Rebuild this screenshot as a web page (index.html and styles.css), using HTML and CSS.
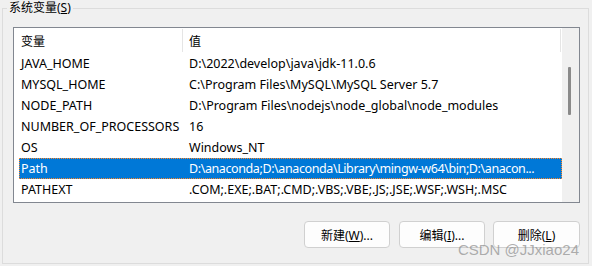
FILE: index.html
```html
<!DOCTYPE html>
<html lang="zh-CN">
<head>
    <meta charset="UTF-8">
    <meta name="viewport" content="width=device-width, initial-scale=1.0">
    <title>系统变量</title>
    <link rel="stylesheet" href="styles.css">
</head>
<body>

    <!-- System variables group -->
    <div class="group">
        <span class="group-title">系统变量(<u>S</u>)</span>

        <!-- Variable list -->
        <div class="list">
            <div class="list-content">
                <div class="list-header">
                    <div class="head-cell head-name">变量</div>
                    <div class="head-cell head-value">值</div>
                </div>

                <div class="row">
                    <div class="cell-name">JAVA_HOME</div>
                    <div class="cell-value">D:\2022\develop\java\jdk-11.0.6</div>
                </div>
                <div class="row">
                    <div class="cell-name">MYSQL_HOME</div>
                    <div class="cell-value">C:\Program Files\MySQL\MySQL Server 5.7</div>
                </div>
                <div class="row">
                    <div class="cell-name">NODE_PATH</div>
                    <div class="cell-value">D:\Program Files\nodejs\node_global\node_modules</div>
                </div>
                <div class="row">
                    <div class="cell-name">NUMBER_OF_PROCESSORS</div>
                    <div class="cell-value">16</div>
                </div>
                <div class="row">
                    <div class="cell-name">OS</div>
                    <div class="cell-value">Windows_NT</div>
                </div>
                <div class="row selected">
                    <div class="cell-name">Path</div>
                    <div class="cell-value cell-long">D:\anaconda;D:\anaconda\Library\mingw-w64\bin;D:\anacon...</div>
                </div>
                <div class="row">
                    <div class="cell-name">PATHEXT</div>
                    <div class="cell-value">.COM;.EXE;.BAT;.CMD;.VBS;.VBE;.JS;.JSE;.WSF;.WSH;.MSC</div>
                </div>
            </div>

            <!-- Vertical scrollbar -->
            <div class="scrollbar">
                <div class="thumb"></div>
            </div>
        </div>

        <!-- Buttons -->
        <div class="actions">
            <button class="btn">新建(<u>W</u>)...</button>
            <button class="btn">编辑(<u>I</u>)...</button>
            <button class="btn btn-last">删除(<u>L</u>)</button>
        </div>

        <span class="watermark">CSDN @JJxiao24</span>
    </div>

</body>
</html>
```

FILE: styles.css
```css
body {
    font-family: "Noto Sans", "Noto Sans CJK SC", sans-serif;
    font-size: 12px;
    background-color: #f0f0f0;
    color: #000;
    margin: 0;
    padding: 0;
    width: 592px;
    height: 266px;
    overflow: hidden;
}

.group {
    position: relative;
    box-sizing: border-box;
    width: 587px;
    height: 256px;
    margin: 8px 0 0 2px;
    padding: 18px 8px 0 10px;
    border: 1px solid #dcdcdc;
}

.group-title {
    position: absolute;
    top: -9px;
    left: 4px;
    padding: 0 2px;
    line-height: 16px;
    background-color: #f0f0f0;
}

.list {
    display: flex;
    box-sizing: border-box;
    width: 567px;
    height: 176px;
    border: 1px solid #828790;
    background-color: #fff;
}

.list-content {
    flex: 1;
    padding-left: 5px;
    overflow: hidden;
}

.list-header {
    display: flex;
    height: 25px;
}

.head-cell {
    box-sizing: border-box;
    height: 23px;
    margin: 1px 0;
    line-height: 25px;
    border-right: 1px solid #e5e5e5;
}

.head-name {
    width: 164px;
    padding-left: 2px;
}

.head-value {
    width: 378px;
    padding-left: 6px;
}

.row {
    display: grid;
    grid-template-columns: 163px 1fr;
    height: 21px;
    line-height: 21px;
    font-size: 12.5px;
}

.cell-name {
    padding-left: 2px;
    white-space: nowrap;
}

.cell-value {
    padding: 0 4px 0 7px;
    white-space: nowrap;
    overflow: hidden;
}

.cell-long {
    letter-spacing: -0.4px;
    overflow: visible;
}

.row.selected {
    background-color: #0078d7;
    color: #fff;
    outline: 1px dotted #ff8728;
    outline-offset: -1px;
}

.scrollbar {
    position: relative;
    width: 17px;
    background-color: #f0f0f0;
}

.thumb {
    position: absolute;
    top: 39px;
    left: 6px;
    width: 3px;
    height: 48px;
    border-radius: 1px;
    background-color: #8a8a8a;
}

.actions {
    display: flex;
    justify-content: flex-end;
    width: 567px;
    margin-top: 18px;
}

.btn {
    box-sizing: border-box;
    width: 86px;
    height: 27px;
    margin-left: 9px;
    padding: 0;
    font-family: inherit;
    font-size: 12px;
    color: #000;
    background-color: #fdfdfd;
    border: 1px solid #d0d0d0;
    border-radius: 4px;
}

.btn-last {
    width: 87px;
    margin-left: 8px;
}

.watermark {
    position: absolute;
    right: 9px;
    bottom: 5px;
    font-family: "Liberation Sans", sans-serif;
    font-size: 15px;
    color: rgba(140, 140, 140, 0.7);
}
```
